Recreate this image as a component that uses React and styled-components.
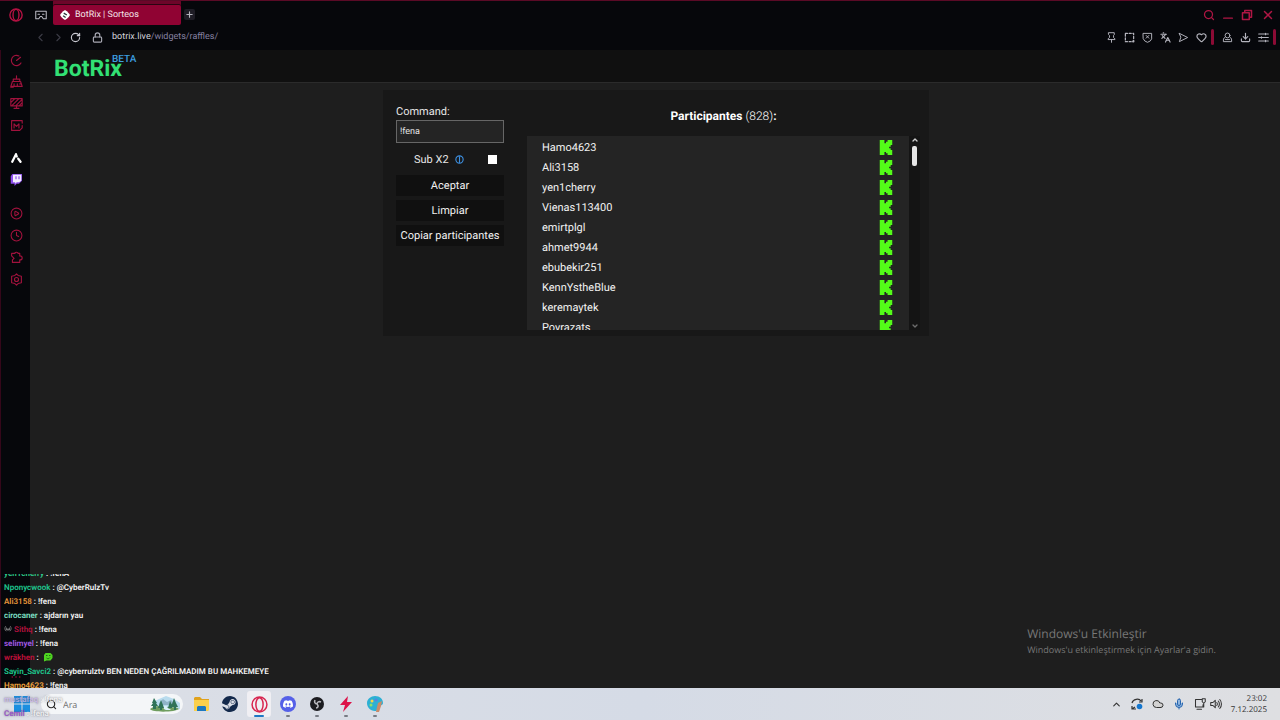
import React, { useState } from 'react'
import styled, { createGlobalStyle } from 'styled-components'
import { Search, X, ChevronLeft, ChevronRight, ChevronUp, ChevronDown, RotateCw, Lock, Plus, Languages, Heart, Download, Clock, CirclePlay, Mic, Cloud } from 'lucide-react'
import { SiSteam, SiDiscord } from 'react-icons/si'

const participants = ['Hamo4623', 'Ali3158', 'yen1cherry', 'Vienas113400', 'emirtplgl', 'ahmet9944', 'ebubekir251', 'KennYstheBlue', 'keremaytek', 'Poyrazats']

const messages = [
  { user: 'yen1cherry', color: '#2fd08f', text: '!fenA' },
  { user: 'Nponycwook', color: '#1fc78e', text: '@CyberRulzTv' },
  { user: 'Ali3158', color: '#e8963a', text: '!fena' },
  { user: 'cirocaner', color: '#7fe0c8', text: 'ajdarın yau' },
  { user: 'Sithq', color: '#b3123f', text: '!fena', badge: true },
  { user: 'selimyel', color: '#a45be8', text: '!fena' },
  { user: 'wräkhen', color: '#c2103c', emote: true },
  { user: 'Sayin_Savci2', color: '#1fc78e', text: '@cyberrulztv BEN NEDEN ÇAĞRILMADIM BU MAHKEMEYE' },
  { user: 'Hamo4623', color: '#f0a540', text: '!fena' },
]

const lastMessages = [
  { user: 'mustafaq', color: '#c9b3e6', text: '!fena' },
  { user: 'Cemil', color: '#8a35c4', text: '!fena' },
]

const OperaIcon = ({ size = 14, color = '#c4154a', width = 1.6 }) => (
  <svg width={size} height={size} viewBox='0 0 16 16' fill='none' stroke={color} strokeWidth={width}>
    <circle cx='8' cy='8' r='7' />
    <ellipse cx='8' cy='8' rx='3.4' ry='6.4' />
  </svg>
)

const KickIcon = () => (
  <svg width='14' height='15' viewBox='0 0 24 24' preserveAspectRatio='none' fill='#53fc18'>
    <path d='M1.3 0h8v5H12V2.7h2.7V0h8v8H20v2.7h-2.7v2.6H20V16h2.7v8h-8v-2.7H12V19H9.300v5h-8Z' />
  </svg>
)

const Line = ({ children, size = 12, color = 'currentColor', width = 1.4 }) => (
  <svg width={size} height={size} viewBox='0 0 16 16' fill='none' stroke={color} strokeWidth={width} strokeLinejoin='round' strokeLinecap='round'>
    {children}
  </svg>
)

const ChatLine = ({ msg }) => (
  <ChatRow>
    {msg.badge && (
      <Line size={8} color='#9a9a9a'>
        <path d='M3 3c-2 3-2 7 1 9M13 3c2 3 2 7-1 9M5 6v4h3V7v3h3V6' />
      </Line>
    )}
    <UserName $color={msg.color}>{msg.user}</UserName>
    <span>:</span>
    {msg.emote ? (
      <Emote width='10' height='10' viewBox='0 0 20 20'>
        <path d='M5 2h10l4 4v6l-4 5H7l-5 2V6z' fill='#4fd321' />
        <path d='M6 7h3M12 7h3M7 12c2 2 5 2 7-1' stroke='#1d6b12' strokeWidth='2' fill='none' />
      </Emote>
    ) : <span>{msg.text}</span>}
  </ChatRow>
)

const App = () => {
  const [command, setCommand] = useState('!fena')
  const [subX2, setSubX2] = useState(false)

  return (
    <Desktop>
      <GlobalStyle />
      <Browser>
        <TabBar>
          <OperaButton aria-label='Opera'><OperaIcon color='#b51243' /></OperaButton>
          <IconButton aria-label='Workspace' $color='#b9b9c2'>
            <Line size={12}><path d='M1 3h14v10h-4l-2-3H7l-2 3H1z' /><path d='M4 7h2M10 7h2' /></Line>
          </IconButton>
          <Tab>
            <svg width='10' height='10' viewBox='0 0 16 16'>
              <path d='M8 0l3 2 3 3 2 3-2 3-3 3-3 2-3-2-3-3-2-3 2-3 3-3z' fill='#fff' />
              <path d='M6 5l5 3M5 9l4 3' stroke='#2a3438' strokeWidth='2' />
            </svg>
            BotRix | Sorteos
          </Tab>
          <NewTab aria-label='New tab'><Plus size={9} strokeWidth={3} /></NewTab>
          <WindowButtons>
            <IconButton aria-label='Search tabs' $color='#b01644'><Search size={12} strokeWidth={2.500} /></IconButton>
            <IconButton aria-label='Minimize' $color='#b01644'><Line size={10} width={2}><path d='M1 13h14' /></Line></IconButton>
            <IconButton aria-label='Restore' $color='#b01644'>
              <Line size={12} width={2}><path d='M2 5h9v9H2zM5 5V2h9v9h-3' /></Line>
            </IconButton>
            <IconButton aria-label='Close' $color='#b01644'><X size={14} strokeWidth={2.500} /></IconButton>
          </WindowButtons>
        </TabBar>

        <AddressBar>
          <NavButtons>
            <IconButton aria-label='Back' $color='#3c3c46'><ChevronLeft size={13} strokeWidth={2} /></IconButton>
            <IconButton aria-label='Forward' $color='#3c3c46'><ChevronRight size={13} strokeWidth={2} /></IconButton>
            <IconButton aria-label='Reload' $color='#c8c8d0'><RotateCw size={11} strokeWidth={2.500} /></IconButton>
          </NavButtons>
          <Lock size={11} strokeWidth={2.500} color='#a9a9b4' />
          <Url href='#raffles'>botrix.live<span>/widgets/raffles/</span></Url>
          <Tools>
            <IconButton aria-label='Pin'><Line size={11}><path d='M4 1h8v3l-1 1v3l2 2v1H3v-1l2-2V5L4 4zM8 11v4' /></Line></IconButton>
            <IconButton aria-label='Snapshot'><Line size={11} width={1.8}><path d='M2 2h12v12H2z' strokeDasharray='3 2.500' /><path d='M13 13h1v1h-1z' /></Line></IconButton>
            <IconButton aria-label='Shield'>
              <Line size={11}><path d='M2 2h12v8l-2 3-4 2-4-2-2-3zM6 5l4 4M10 5L6 9' /></Line>
            </IconButton>
            <IconButton aria-label='Translate'><Languages size={11} strokeWidth={2.500} /></IconButton>
            <IconButton aria-label='Flow'><Line size={11}><path d='M2 2l12 6-12 6 2-6z' /></Line></IconButton>
            <IconButton aria-label='Favorite'><Heart size={11} strokeWidth={2.500} /></IconButton>
          </Tools>
          <RedBar />
          <Tools>
            <IconButton aria-label='Profile'>
              <Line size={11}><circle cx='8' cy='5' r='3.5' /><path d='M4 8c-2 1-2 2-2 6h12c0-4 0-5-2-6M5 11h6' /></Line>
            </IconButton>
            <IconButton aria-label='Downloads'><Download size={11} strokeWidth={2.500} /></IconButton>
            <IconButton aria-label='Menu'><Line size={11} width={1.6}><path d='M1 3h14M1 8h14M1 13h14M11 2v2M5 7v2M11 12v2' /></Line></IconButton>
          </Tools>
          <RedBar />
        </AddressBar>

        <Main>
          <SideBar>
            <SideButton aria-label='GX Control'><Line size={13}><path d='M13.500 11A6.300 6.300 0 1 1 11 2.400M8 8l5-4' /></Line></SideButton>
            <SideButton aria-label='GX Cleaner'>
              <Line size={13}><path d='M8 1v4M4 5h8v3H4zM3 8h10l2 6H1zM5 11v3M9 11v3M1 15h3M12 11h2' /></Line>
            </SideButton>
            <SideButton aria-label='Player'>
              <Line size={13}><path d='M1 2h14v9H1zM5 14h6M1 7l5-5M2 11l9-9M7 11l8-8M11 11l4-4M8 11v3' /></Line>
            </SideButton>
            <SideButton aria-label='Mods'><Line size={13}><path d='M15 5V2H2v12h9M15 8v3l-3 3M5 11V6l3 3 3-3v5' /></Line></SideButton>
            <Gap />
            <SideButton aria-label='Aria'>
              <Line size={12} color='#ffffff' width={3}><path d='M8 3L3 13M8 3l1 3M11 9l3 4' /></Line>
            </SideButton>
            <SideButton aria-label='Twitch'>
              <svg width='12' height='12' viewBox='0 0 16 16'>
                <path d='M3 0h13v9l-4 4H9l-3 3v-3H1V3z' fill='#8b4dea' />
                <path d='M4 1h11v8l-3 2H9l-2 2v-2H4z' fill='#f4edff' />
                <path d='M8 3v4M12 3v4' stroke='#8b4dea' strokeWidth='1.500' />
              </svg>
            </SideButton>
            <Gap />
            <SideButton aria-label='Play'><CirclePlay size={13} strokeWidth={2} /></SideButton>
            <SideButton aria-label='History'><Clock size={13} strokeWidth={2} /></SideButton>
            <SideButton aria-label='Extensions'><Line size={13}><path d='M2 3h4c0-2 4-2 4 0h2v3c4 0 4 5 0 5v3H3v-3l2-2-3-3z' /></Line></SideButton>
            <SideButton aria-label='Settings'><Line size={13}><path d='M8 1l2 2 4 1v8l-4 1-2 2-2-2-4-1V4l4-1z' /><circle cx='8' cy='8' r='2.500' /></Line></SideButton>
            <MoreButton aria-label='More'><Line size={10} width={2.400}><path d='M2 8h0M8 8h0M14 8h0' /></Line></MoreButton>
          </SideBar>

          <Page>
            <SiteHeader>
              <Logo href='#home'>BotRix<sup>BETA</sup></Logo>
            </SiteHeader>
            <Content>
              <Panel>
                <Controls>
                  <label htmlFor='command'>Command:</label>
                  <CommandInput id='command' value={command} onChange={(e) => setCommand(e.target.value)} />
                  <SubRow>
                    <label htmlFor='sub'>Sub X2</label>
                    <Line size={9} color='#3d8fe0' width={2}><circle cx='8' cy='8' r='6.500' /><path d='M8 3v10' /></Line>
                    <CheckBox id='sub' type='checkbox' checked={subX2} onChange={(e) => setSubX2(e.target.checked)} />
                  </SubRow>
                  <ActionButton>Aceptar</ActionButton>
                  <ActionButton>Limpiar</ActionButton>
                  <ActionButton>Copiar participantes</ActionButton>
                </Controls>
                <Participants>
                  <h2>Participantes <span>(828)</span>:</h2>
                  <ListBox>
                    <List>
                      {participants.map((name) => (
                        <li key={name}>{name}<KickIcon /></li>
                      ))}
                    </List>
                    <ScrollBar>
                      <ChevronUp size={8} strokeWidth={4} color='#cfcfcf' />
                      <Thumb />
                      <ChevronDown size={8} strokeWidth={4} color='#6d6d6d' />
                    </ScrollBar>
                  </ListBox>
                </Participants>
              </Panel>
            </Content>
          </Page>
        </Main>

        <Chat>{messages.map((msg) => <ChatLine key={msg.user} msg={msg} />)}</Chat>
        <Watermark>
          <h3>Windows'u Etkinleştir</h3>
          <p>Windows'u etkinleştirmek için Ayarlar'a gidin.</p>
        </Watermark>
      </Browser>

      <TaskBar>
        <StartButton aria-label='Start'>
          <svg width='16' height='16' viewBox='0 0 16 16' fill='#1b8fe0'>
            <path d='M0 0h7.500v7.500H0zM8.500 0H16v7.500H8.500zM0 8.500h7.500V16H0zM8.500 8.500H16V16H8.500z' />
          </svg>
        </StartButton>
        <SearchBox>
          <Search size={11} strokeWidth={2.500} color='#2b2b2b' />
          <input aria-label='Ara' placeholder='Ara' />
          <svg width='30' height='18' viewBox='0 0 30 18'>
            <path d='M3 7l6-3 7-3 8 3 6 4v6H3z' fill='#b9dcee' />
            <path d='M9 8l4-4 4 3 4-2 5 5H9z' fill='#8fb4c8' />
            <path d='M0 14c6-4 10-3 15-2s10-1 14 2c-3 3-26 4-29 0z' fill='#6f9d5e' />
            <path d='M12 11c3 1 0 3 4 4h5c-2-2-5-2-4-4z' fill='#d9f1fb' />
            <path d='M4 3l3 5H6l2 3H6v3H3v-3H1l2-3H2zM11 5l2 5 1 3h-2v2h-2v-2H8zM24 3l2 5 2 4h-2v3h-2v-3h-3zM20 6l2 4v3h-4z' fill='#2f7358' />
          </svg>
        </SearchBox>
        <Apps>
          <AppButton aria-label='Explorer'>
            <svg width='17' height='16' viewBox='0 0 17 16'>
              <path d='M1 2l1-1h5l2 2h7v4H1z' fill='#e0a21c' />
              <path d='M1 4h15v10l-1 1H1z' fill='#fbd04c' />
              <path d='M4 11l1-1h7l1 1v4H4z' fill='#1c78c0' />
            </svg>
          </AppButton>
          <AppButton aria-label='Steam'><SiSteam size={16} color='#13294b' /></AppButton>
          <AppButton aria-label='Opera GX' $active><OperaIcon size={17} color='#d8244f' width={1.4} /></AppButton>
          <AppButton aria-label='Discord' $open>
            <svg width='16' height='16' viewBox='0 0 16 16'>
              <circle cx='8' cy='8' r='8' fill='#5560e8' />
              <SiDiscord x='3' y='3' size={10} color='#ffffff' />
            </svg>
          </AppButton>
          <AppButton aria-label='OBS' $open>
            <svg width='14' height='14' viewBox='0 0 14 14'>
              <circle cx='7' cy='7' r='7' fill='#1c1c20' />
              <g fill='none' stroke='#b8b8bd' strokeWidth='1.600'>
                <path d='M5 3c-1 2 0 4 2 4M11 5c-2-1-4 0-4 2M6 11c2 0 3-2 1-4' />
              </g>
            </svg>
          </AppButton>
          <AppButton aria-label='Bolt' $open>
            <svg width='14' height='16' viewBox='0 0 14 16' fill='#dc1248'><path d='M9 0L1 9h5l-2 7 9-10H8z' /></svg>
          </AppButton>
          <AppButton aria-label='Paint' $open>
            <svg width='16' height='16' viewBox='0 0 16 16'>
              <path d='M8 0c5 0 8 3 8 7 0 3-4 2-5 4s0 4-3 4c-5 0-8-4-8-8s4-7 8-7z' fill='#2db0d4' />
              <circle cx='5' cy='5' r='1.500' fill='#f3d34a' /><circle cx='9' cy='4' r='1.500' fill='#5a7fe2' /><circle cx='4' cy='9' r='1.500' fill='#8ee06a' />
              <path d='M11 7l4-2-1 5-2 6H9l1-5z' fill='#c98a6a' />
            </svg>
          </AppButton>
        </Apps>
        <Tray>
          <ChevronUp size={11} strokeWidth={2.500} />
          <svg width='12' height='12' viewBox='0 0 12 12' fill='none' stroke='#333' strokeWidth='1.2'>
            <path d='M1 5c1-4 7-5 9-2M11 1v3H8M5 11H1V8M1 11l3-2' />
            <circle cx='8.500' cy='8.500' r='2.800' fill='#1477cf' stroke='none' />
          </svg>
          <Cloud size={12} fill='#d2d2d2' />
          <Mic size={12} color='#2765ae' fill='#8eb4df' />
          <TrayPair>
            <Line size={12}><path d='M10 2H2v10h10V9M4 15h6M11 1h4v4l-2 2-2-2zM13 7v5' /></Line>
            <Line size={12}><path d='M1 6h3l3-3v10l-3-3H1zM9 6c1 1 1 3 0 4M11 4c2 2 2 6 0 8M13 2c3 3 3 9 0 12' /></Line>
          </TrayPair>
          <TimeBox><span>23:02</span><span>7.12.2025</span></TimeBox>
        </Tray>
        <GhostChat>{lastMessages.map((msg) => <ChatLine key={msg.user} msg={msg} />)}</GhostChat>
      </TaskBar>
    </Desktop>
  )
}

export default App

const GlobalStyle = createGlobalStyle`
*{
  box-sizing:border-box;
}
body{
  margin:0;
  background:#1e1e1e;
  font-family:Roboto,"Liberation Sans",sans-serif;
  text-rendering:geometricPrecision;
}
button,input{
  font-family:inherit;
  text-rendering:inherit;
}
button{
  border:none;
  background:none;
  padding:0;
  color:inherit;
}
svg{
  flex-shrink:0;
  display:block;
}
h2,h3,p,ul{
  margin:0;
  padding:0;
}
`

const Desktop = styled.div`
display:flex;
flex-direction:column;
min-height:100vh;
`

const Browser = styled.div`
position:relative;
flex:1;
display:flex;
flex-direction:column;
background:#06070b;
border-top:1px solid #5a0a26;
overflow:hidden;
`

const TabBar = styled.div`
display:flex;
align-items:center;
height:27px;
padding:0 5px 0 9px;
`

const IconButton = styled.button`
display:flex;
align-items:center;
justify-content:center;
color:${({ $color }) => $color || '#b4b4bd'};
`

const OperaButton = styled(IconButton)`
margin-right:12px;
`

const Tab = styled.button`
display:flex;
align-items:center;
gap:5px;
width:128px;
height:20px;
margin-left:6px;
padding:0 7px;
background:#900333;
border-radius:2px;
box-shadow:0 -1px 0 #2a0512,0 -5px 0 #6d0529;
color:#f3e3e9;
font-size:9px;
`

const NewTab = styled(IconButton)`
width:11px;
height:11px;
margin-left:3px;
background:#1e1c25;
border-radius:2px;
`

const WindowButtons = styled.div`
display:flex;
align-items:center;
gap:8px;
margin-left:auto;
`

const AddressBar = styled.div`
display:flex;
align-items:center;
height:22px;
padding:0 4px 4px 34px;
`

const NavButtons = styled.div`
display:flex;
gap:5px;
margin-right:11px;
`

const Url = styled.a`
margin-left:9px;
margin-right:auto;
color:#d5d5dc;
font-size:9px;
text-decoration:none;
span{
  color:#8580a0;
}
`

const Tools = styled.div`
display:flex;
gap:7px;
`

const RedBar = styled.div`
width:3px;
height:16px;
margin:0 8px 0 4px;
border-radius:2px;
background:#8c0b35;
&:last-child{
  margin-right:0;
}
`

const Main = styled.div`
flex:1;
display:flex;
`

const SideBar = styled.nav`
display:flex;
flex-direction:column;
align-items:center;
width:30px;
padding-right:1px;
padding-left:2px;
border-left:1px solid #35071a;
`

const SideButton = styled.button`
display:flex;
align-items:center;
justify-content:center;
height:22px;
color:#a1123d;
&:first-child{
  height:20px;
}
`

const MoreButton = styled(SideButton)`
margin-top:auto;
`

const Gap = styled.div`
height:11px;
`

const Page = styled.div`
flex:1;
background:#1e1e1e;
`

const SiteHeader = styled.header`
display:flex;
align-items:center;
height:33px;
padding:4px 24px 0;
background:#101010;
border-bottom:1px solid #2b2b2b;
`

const Logo = styled.a`
display:flex;
color:#32e074;
font-size:23px;
font-weight:700;
line-height:27px;
text-decoration:none;
sup{
  margin-left:-10px;
  color:#3d9fe0;
  font-size:10px;
  font-weight:500;
  line-height:10px;
}
`

const Content = styled.div`
padding:7px 0 0 2px;
`

const Panel = styled.section`
display:flex;
gap:23px;
max-width:546px;
margin:0 auto;
padding:15px 9px 6px 13px;
background:#181818;
color:#e6e6e6;
font-size:11px;
`

const Controls = styled.div`
display:flex;
flex-direction:column;
width:108px;
> label{
  line-height:14px;
  padding-bottom:1px;
}
`

const CommandInput = styled.input`
width:100%;
height:23px;
padding:1px 3px 0;
background:#242424;
border:1px solid #666666;
color:#e6e6e6;
font-size:9px;
`

const SubRow = styled.div`
display:flex;
align-items:center;
gap:6px;
height:32px;
padding:1px 7px 0 18px;
`

const CheckBox = styled.input`
appearance:none;
width:9px;
height:9px;
margin:0 0 0 auto;
background:#ffffff;
&:checked{
  background:#3d8fe0;
}
`

const ActionButton = styled.button`
height:21px;
margin-bottom:4px;
background:#101010;
color:#f0f0f0;
font-size:11px;
white-space:nowrap;
`

const Participants = styled.div`
flex:1;
min-width:0;
h2{
  color:#ffffff;
  font-size:12px;
  font-weight:700;
  line-height:23px;
  margin-bottom:8px;
  text-align:center;
  span{
    font-weight:300;
  }
}
`

const ListBox = styled.div`
display:flex;
height:194px;
`

const List = styled.ul`
flex:1;
overflow:hidden;
background:#242424;
padding:1px 16px 0 15px;
li{
  display:flex;
  align-items:center;
  justify-content:space-between;
  height:20px;
  color:#f2f2f2;
}
`

const ScrollBar = styled.div`
display:flex;
flex-direction:column;
align-items:center;
width:11px;
background:#141414;
svg:last-child{
  margin-top:auto;
}
`

const Thumb = styled.div`
width:5px;
height:20px;
margin-top:2px;
background:#e4e4e4;
border-radius:2px;
`

const Chat = styled.div`
position:absolute;
left:4px;
bottom:-4px;
height:118px;
display:flex;
flex-direction:column;
justify-content:flex-end;
overflow:hidden;
`

const ChatRow = styled.div`
display:flex;
flex-shrink:0;
align-items:center;
gap:2px;
height:14px;
color:#f4f4f4;
font-size:8px;
font-weight:600;
white-space:nowrap;
`

const UserName = styled.span`
color:${({ $color }) => $color};
`

const Emote = styled.svg`
margin-left:2px;
`

const GhostChat = styled.div`
position:absolute;
left:4px;
bottom:0;
opacity:0.8;
text-shadow:0 0 2px #55555f;
`

const Watermark = styled.div`
position:absolute;
right:54px;
bottom:32px;
color:#777777;
font-family:"Open Sans","Noto Sans",sans-serif;
h3{
  font-size:12px;
  font-weight:400;
  line-height:18px;
}
p{
  font-size:9px;
  line-height:13px;
  padding-right:10px;
}
`

const TaskBar = styled.footer`
position:relative;
display:flex;
align-items:center;
height:32px;
padding:0 13px 0 14px;
background:linear-gradient(90deg,#dcdfe6,#d5dbe6 50%,#dedfe2);
color:#333333;
`

const StartButton = styled.button`
display:flex;
`

const SearchBox = styled.div`
display:flex;
align-items:center;
gap:6px;
width:142px;
height:20px;
margin-left:11px;
padding:0 3px 0 5px;
background:#f4f6f8;
border-radius:10px;
input{
  flex:1;
  min-width:0;
  border:none;
  background:none;
  padding:0;
  font-family:"Open Sans",sans-serif;
  font-size:9px;
}
`

const Apps = styled.div`
display:flex;
gap:5px;
margin-left:6px;
`

const AppButton = styled.button`
position:relative;
display:flex;
align-items:center;
justify-content:center;
width:24px;
height:26px;
border-radius:3px;
background:${({ $active }) => $active ? '#f0eff3' : 'none'};
&::after{
  content:"";
  display:${({ $active, $open }) => $active || $open ? 'block' : 'none'};
  position:absolute;
  bottom:0;
  width:${({ $active }) => $active ? '10px' : '4px'};
  height:2px;
  border-radius:1px;
  background:${({ $active }) => $active ? '#1f78c4' : '#777b84'};
}
`

const Tray = styled.div`
display:flex;
align-items:center;
gap:9px;
margin-left:auto;
`

const TrayPair = styled.div`
display:flex;
gap:4px;
`

const TimeBox = styled.div`
display:flex;
flex-direction:column;
align-items:flex-end;
font-family:"Open Sans",sans-serif;
font-size:8px;
line-height:11px;
`
